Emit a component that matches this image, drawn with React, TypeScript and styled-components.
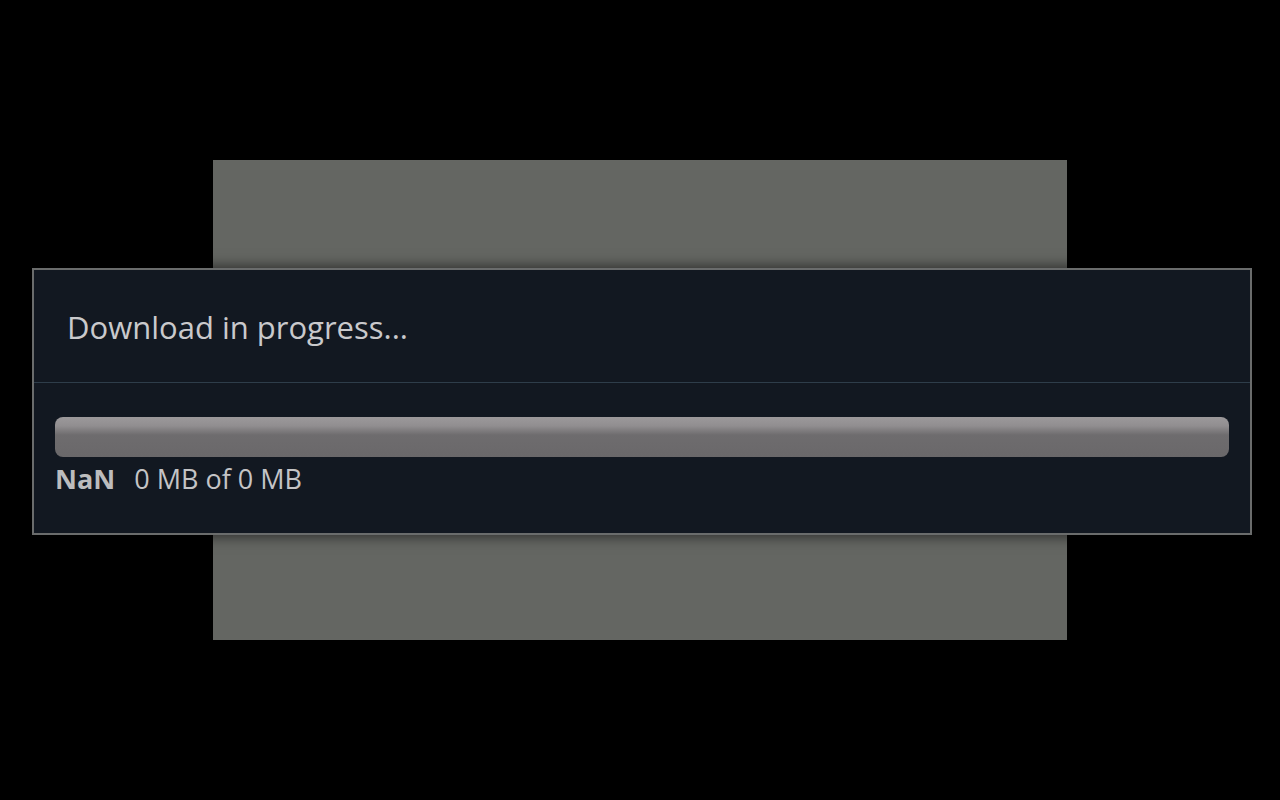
import styled, { createGlobalStyle } from 'styled-components';

const GlobalStyle = createGlobalStyle`
  html, body {
    margin: 0;
    padding: 0;
    background: #000;
    font-family: "Open Sans", "Noto Sans", "DejaVu Sans", sans-serif;
  }
`;

const Screen = styled.div`
  position: relative;
  width: 1280px;
  height: 800px;
  background: #000;
  display: flex;
  align-items: center;
  justify-content: center;
  overflow: hidden;
`;

const Backdrop = styled.div`
  width: 854px;
  height: 480px;
  background: #646662;
`;

const Dialog = styled.div`
  position: absolute;
  top: 268px;
  left: 32px;
  width: 1220px;
  height: 267px;
  box-sizing: border-box;
  border: 2px solid #6a6c6c;
  background: #121821;
  box-shadow: 0 0 12px 2px rgba(0, 0, 0, 0.55);
  display: flex;
  flex-direction: column;
`;

const Header = styled.div`
  height: 113px;
  box-sizing: border-box;
  display: flex;
  align-items: center;
  padding: 2px 0 0 33px;
  border-bottom: 1px solid #2e3d4a;
`;

const Title = styled.h1`
  margin: 0;
  font-size: 31px;
  font-weight: 400;
  color: #c9c9cc;
`;

const Body = styled.div`
  padding: 34px 21px 0 21px;
  display: flex;
  flex-direction: column;
`;

const Track = styled.div`
  height: 40px;
  border-radius: 8px;
  background: linear-gradient(
    to bottom,
    #9c999b 0%,
    #918e90 22%,
    #6e6c6e 45%,
    #6a686a 100%
  );
`;

const Stats = styled.div`
  display: flex;
  align-items: baseline;
  gap: 19px;
  margin-top: 3px;
`;

const Percent = styled.span`
  font-size: 27px;
  font-weight: 700;
  color: #bcbcbd;
`;

const Amount = styled.span`
  font-size: 27px;
  font-weight: 400;
  color: #c4c4c6;
`;

export default function App() {
  return (
    <>
      <GlobalStyle />
      <Screen>
        <Backdrop />
        <Dialog>
          <Header>
            <Title>Download in progress...</Title>
          </Header>
          <Body>
            <Track />
            <Stats>
              <Percent>NaN</Percent>
              <Amount>0 MB of 0 MB</Amount>
            </Stats>
          </Body>
        </Dialog>
      </Screen>
    </>
  );
}
